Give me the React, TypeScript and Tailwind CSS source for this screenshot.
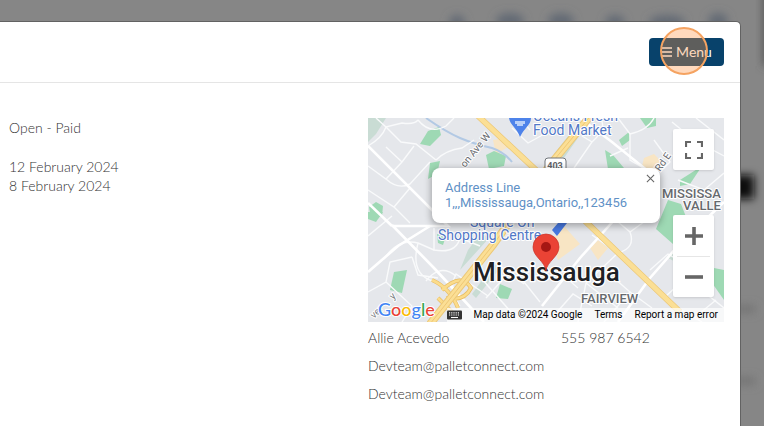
import React from "react";

const minorRoads = [
  "M8 0 L18 9 L34 5 Q46 7 50 2",
  "M18 9 Q14 20 0 28 M18 9 L33 24 L48 26 L68 42",
  "M0 48 L18 61 L34 44 L46 28 M18 61 Q30 72 42 66 L62 44",
  "M34 44 L18 29 M0 72 L26 89 L42 70 M26 89 L42 105",
  "M50 2 Q62 17 78 8 L86 0 M68 42 Q78 32 94 30 L106 22",
  "M0 118 L24 98 M16 141 Q30 120 50 125 L66 132 M50 125 Q42 155 64 163",
  "M66 110 L66 132 Q88 136 92 120 L112 128",
  "M0 174 L18 164 L22 144 L44 139 M18 164 L44 188 L34 204",
  "M44 139 L50 157 L70 160 M58 163 Q72 145 88 158",
  "M92 188 Q80 170 88 156 L120 178 M106 152 L150 202",
  "M126 143 L156 166 M118 180 L145 150 L172 184",
  "M144 10 L160 25 L180 14 M152 0 L162 12",
  "M206 50 L224 24 L214 18 M224 24 Q240 10 232 0",
  "M250 0 L262 16 Q280 12 286 0 M262 16 L262 42 L282 54",
  "M286 22 L302 44 L292 54 M260 30 L242 38",
  "M310 62 L336 72 L356 55 M304 4 L326 22 L356 38 M328 0 L356 22",
  "M224 117 L250 135 Q268 130 262 114 L250 104 M262 114 L287 96",
  "M250 135 L218 165 L210 204 M218 165 L250 190 M236 204 L262 174 L246 160",
  "M262 174 L284 190 M182 202 L205 176 L224 188",
  "M282 152 L300 136 L310 142 M298 178 L318 160 L356 190",
  "M326 200 L348 182 M312 191 L334 204 M196 158 L210 170",
];

const majorRoads = [
  "M0 28 L80 108 L24 108 M24 107 L66 150 L116 204",
  "M24 108 L0 85",
  "M0 154 L30 128 L62 108",
  "M212 0 L244 24 L286 58",
  "M250 204 L282 160 L310 128 L356 84",
  "M174 188 L212 140 L248 100",
];

const parks = [
  "M60 13 L71 9 L73 17 L62 28 L52 26Z",
  "M62 45 L72 43 L69 56 L60 61Z",
  "M118 37 L126 33 L138 38 L136 48 L121 51Z",
  "M1 89 L8 84 L15 88 L14 98 L3 101Z",
  "M0 94 L15 94 L8 104 L0 101Z",
  "M26 154 L39 152 L34 175 L22 172Z",
  "M132 166 L144 171 L140 181 L128 180Z",
  "M69 116 L78 118 L75 127 L70 125Z",
  "M237 32 L245 37 L256 50 L253 58 L240 51Z",
  "M251 22 L261 14 L262 22 L254 28Z",
  "M272 0 L288 0 L288 8 L279 10Z",
  "M312 62 L334 48 L322 66 L312 68Z",
  "M300 82 L313 86 L320 104 L334 112 L334 130 L305 126 L288 111Z",
  "M346 150 L356 152 L356 182 L342 162Z",
];

function MapArtwork() {
  return (
    <svg
      aria-hidden="true"
      className="block h-full w-full"
      viewBox="0 0 356 204"
      preserveAspectRatio="xMidYMid slice"
    >
      <rect width="356" height="204" fill="#e5e7eb" />
      <path d="M0 0 H18 L8 16 L0 24Z M186 36 L208 8 L214 14 L196 40Z M100 132 L112 116 L122 119 L92 152Z M104 176 L126 146 L132 150 L108 180Z M300 140 L312 124 L334 140 V158Z" fill="#c9dcd4" />
      <path d="M125 22 L136 20 L142 28 L128 36Z M276 40 L286 36 L296 46 L288 54 L274 48Z M184 122 L196 108 L212 126 L190 142Z M222 130 L230 122 L240 130 L230 142Z" fill="#f8e5c4" />
      {parks.map((d) => (
        <path key={d} d={d} fill="#9ed9b4" />
      ))}
      <path d="M58 0 Q78 14 92 20 T124 30 Q136 34 144 44" stroke="#b2c9e4" strokeWidth="2" fill="none" />
      <g stroke="#f9fafb" strokeWidth="1.4" fill="none">
        {minorRoads.map((d) => (
          <path key={d} d={d} />
        ))}
      </g>
      <g stroke="#ffffff" strokeWidth="2.6" fill="none">
        {majorRoads.map((d) => (
          <path key={d} d={d} />
        ))}
      </g>
      <g fill="none">
        <path d="M64 162 Q82 170 90 190 M74 172 Q94 154 103 170 Q96 184 78 180 M70 180 L86 196" stroke="#e8bd65" strokeWidth="4" />
        <path d="M64 162 Q82 170 90 190 M74 172 Q94 154 103 170 Q96 184 78 180 M70 180 L86 196" stroke="#fbdc8b" strokeWidth="2.6" />
        <path d="M224 -4 L182 47 L125 127 L62 206" stroke="#ecc878" strokeWidth="8" />
        <path d="M224 -4 L182 47 L125 127 L62 206" stroke="#fbdf95" strokeWidth="6" />
        <path d="M224 -4 L182 47 L125 127 L62 206" stroke="#efc775" strokeWidth="1" />
        <path d="M108 -4 L170 54 L218 104 L312 194" stroke="#ecc878" strokeWidth="6" />
        <path d="M108 -4 L170 54 L218 104 L312 194" stroke="#fbdf95" strokeWidth="4.6" />
      </g>
      <g fontFamily="Roboto, sans-serif" stroke="#ffffff" strokeWidth="2" paintOrder="stroke" strokeLinejoin="round">
        <text x="165" y="3" fontSize="14" fill="#5278c7">Oceans Fresh</text>
        <text x="165" y="17" fontSize="14" fill="#5278c7">Food Market</text>
        <text x="102" y="109" fontSize="14" fill="#5278c7">Square On</text>
        <text x="70" y="122" fontSize="14" fill="#5278c7">Shopping Centre</text>
        <text x="294" y="80" fontSize="13" fontWeight="500" fill="#66696e">MISSISSA</text>
        <text x="315" y="92" fontSize="13" fontWeight="500" fill="#66696e">VALLE</text>
        <text x="213" y="185" fontSize="13" fontWeight="500" fill="#66696e">FAIRVIEW</text>
        <text transform="translate(97 50) rotate(-51)" fontSize="10" fill="#66696e">on Ave W</text>
        <text transform="translate(292 54) rotate(-55)" fontSize="10" fill="#66696e">Rd E</text>
        <text transform="translate(6 201) rotate(-44)" fontSize="10" fill="#777b80">ver</text>
        <text transform="translate(25 182) rotate(-44)" fontSize="10" fill="#777b80">y</text>
      </g>
      <g>
        <rect x="177" y="40" width="21" height="15" rx="3" fill="#ffffff" stroke="#70757a" />
        <text x="187" y="51" textAnchor="middle" fontFamily="Roboto, sans-serif" fontSize="9" fontWeight="700" fill="#5f6368">403</text>
      </g>
      <path d="M141 0 H163 C163 7 156 10 152 19 C149 10 142 7 141 0Z" fill="#4e83ea" />
      <path d="M147 3 H157 V6 H155 V8 H149 V6 H147Z" fill="#b9d0f8" />
      <path d="M184 112 L190 105 H199 L189 118Z" fill="#4778df" />
      <text x="105" y="163" fontFamily="Roboto, sans-serif" fontSize="26" fontWeight="500" fill="#202124" stroke="#ffffff" strokeWidth="2.5" paintOrder="stroke">Mississauga</text>
      <path d="M178 153 C177 143 165 139 165 129 A13 13 0 0 1 191 129 C191 139 179 143 178 153Z" fill="#ea4335" stroke="#c83228" strokeWidth=".7" />
      <circle cx="178" cy="129" r="5" fill="#a61714" />
    </svg>
  );
}

function AddressMap() {
  return (
    <section aria-label="Map" className="relative h-[204px] overflow-hidden font-[Roboto,sans-serif] font-normal">
      <MapArtwork />
      <div className="absolute top-[50px] left-1/2 h-[55px] w-[228px] -translate-x-1/2 rounded-lg bg-white pt-3 pl-[13px] text-[13px] leading-[15px] text-[#5f91c6] shadow-[0_2px_7px_1px_rgba(0,0,0,0.3)]">
        <p>Address Line<br />1,,,Mississauga,Ontario,,123456</p>
        <button aria-label="Close" className="absolute top-1 right-1 flex size-3 items-center justify-center">
          <svg viewBox="0 0 10 10" className="size-[9px]" stroke="#666666" strokeWidth="1.2">
            <path d="M1 1 L9 9 M9 1 L1 9" />
          </svg>
        </button>
      </div>
      <button aria-label="Toggle fullscreen view" className="absolute top-[11px] right-[10px] flex size-[41px] items-center justify-center rounded-xs bg-white shadow-sm">
        <svg viewBox="0 0 18 18" className="size-[18px]" fill="none" stroke="#666666" strokeWidth="2.2">
          <path d="M1 6 V1 H6 M12 1 H17 V6 M17 12 V17 H12 M6 17 H1 V12" />
        </svg>
      </button>
      <div className="absolute top-[97px] right-[10px] flex w-[41px] flex-col rounded-xs bg-white shadow-sm">
        <button aria-label="Zoom in" className="flex h-[41px] items-center justify-center">
          <svg viewBox="0 0 18 18" className="size-[18px]" stroke="#666666" strokeWidth="3.6"><path d="M0 9 H18 M9 0 V18" /></svg>
        </button>
        <hr className="mx-1 border-[#e6e6e6]" />
        <button aria-label="Zoom out" className="flex h-[40px] items-center justify-center">
          <svg viewBox="0 0 18 18" className="size-[18px]" stroke="#666666" strokeWidth="3.6"><path d="M0 9 H18" /></svg>
        </button>
      </div>
      <a href="#google" aria-label="Google" className="absolute bottom-0 left-[10px] font-[Lato,sans-serif] text-[18px] leading-[26px] font-medium [-webkit-text-stroke:2px_white] [paint-order:stroke]">
        <span className="text-[#4285f4]">G</span><span className="text-[#ea4335]">o</span><span className="text-[#fbbc05]">o</span><span className="text-[#4285f4]">g</span><span className="text-[#34a853]">l</span><span className="text-[#ea4335]">e</span>
      </a>
      <div className="absolute right-0 bottom-0 flex h-[14px] items-center gap-3 bg-white/70 pr-[6px] text-[10px] leading-[14px] text-black">
        <button aria-label="Keyboard shortcuts" className="flex items-center">
          <svg viewBox="0 0 15 10" className="h-[10px] w-[15px]">
            <rect width="15" height="9" y=".5" rx="1" fill="#333333" />
            <path d="M2 2.8 H13 M2 5 H13" stroke="#ffffff" strokeWidth="1.2" strokeDasharray="1.2 1" />
            <path d="M4 7.5 H11" stroke="#ffffff" strokeWidth="1.1" />
          </svg>
        </button>
        <span>Map data ©2024 Google</span>
        <a href="#terms">Terms</a>
        <a href="#report">Report a map error</a>
      </div>
    </section>
  );
}

function Backdrop() {
  return (
    <svg aria-hidden="true" className="absolute inset-0 h-full w-full" viewBox="0 0 764 426" preserveAspectRatio="xMaxYMin slice">
      <defs>
        <filter id="soft" x="-100%" y="-100%" width="300%" height="300%"><feGaussianBlur stdDeviation="4" /></filter>
      </defs>
      <g filter="url(#soft)" fill="#646b75">
        <ellipse cx="457" cy="22" rx="8" ry="7" />
        <ellipse cx="510" cy="21" rx="14" ry="8" />
        <ellipse cx="561" cy="21" rx="13" ry="8" />
        <ellipse cx="615" cy="22" rx="10" ry="7" />
        <ellipse cx="667" cy="22" rx="18" ry="7" />
        <ellipse cx="718" cy="21" rx="10" ry="8" />
      </g>
      <rect x="720" y="175" width="34" height="24" fill="#111111" filter="url(#soft)" />
      <rect x="763" y="-10" width="8" height="76" fill="#555555" filter="url(#soft)" />
      <g filter="url(#soft)" fill="#747474"><rect x="735" y="305" width="20" height="8" /><rect x="735" y="377" width="20" height="8" /></g>
    </svg>
  );
}

export default function App() {
  return (
    <div className="relative min-h-screen overflow-hidden bg-[#868686] pt-[21px] pr-[23px] font-[Lato,sans-serif] text-[#333333]">
      <Backdrop />
      <main className="relative min-h-[calc(100vh-21px)] rounded-tr-[5px] border-t border-r border-[#626262] bg-white">
        <header className="flex h-[61px] items-center justify-end border-b border-[#e5e5e5] pr-4">
          <button className="relative flex h-7 w-[75px] items-center justify-center gap-1 rounded-sm bg-[#08426b] text-[14px] leading-5 text-white">
            <svg aria-hidden="true" viewBox="0 0 11 10" className="h-[10px] w-[11px]" stroke="currentColor" strokeWidth="1.4"><path d="M0 1 H11 M0 5 H11 M0 9 H11" /></svg>
            Menu
            <span aria-hidden="true" className="absolute -top-[11px] left-[11px] size-12 rounded-full border-2 border-[#f5a361] bg-[#ff9142]/35" />
          </button>
        </header>
        <div className="grid grid-cols-2 gap-3 pt-[35px] pr-4 text-[14px] font-light">
          <div className="pl-[9px] leading-[19px]">
            <p>Open - Paid</p>
            <div className="pt-5">
              <p>12 February 2024</p>
              <p>8 February 2024</p>
            </div>
          </div>
          <div className="leading-5">
            <AddressMap />
            <address className="flex flex-col gap-2 pt-[6px] not-italic">
              <div className="grid grid-cols-[193fr_163fr]"><span>Allie Acevedo</span><span>555 987 6542</span></div>
              <a href="mailto:Devteam@palletconnect.com">Devteam@palletconnect.com</a>
              <a href="mailto:Devteam@palletconnect.com">Devteam@palletconnect.com</a>
            </address>
          </div>
        </div>
      </main>
    </div>
  );
}
